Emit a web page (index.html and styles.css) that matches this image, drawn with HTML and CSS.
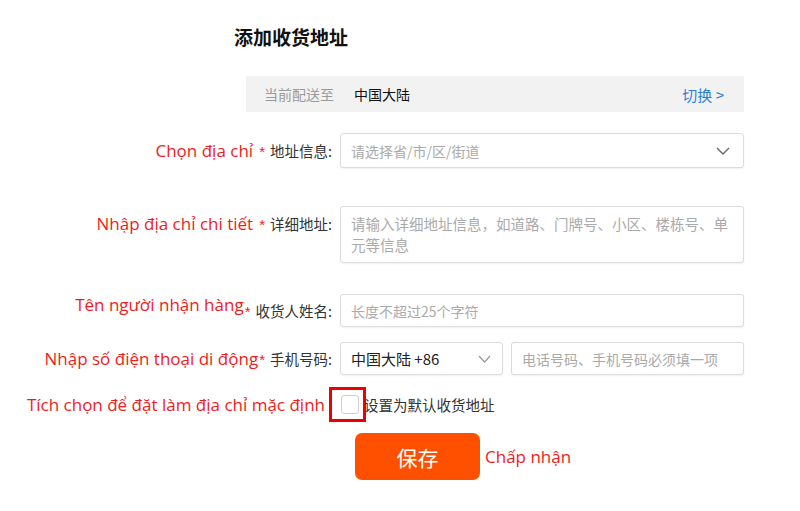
FILE: index.html
```html
<!DOCTYPE html>
<html lang="zh-CN">
<head>
    <meta charset="UTF-8">
    <title>添加收货地址</title>
    <link rel="stylesheet" href="styles.css">
</head>
<body>
    <div class="page">
        <h1 class="title">添加收货地址</h1>

        <div class="ship">
            <span class="ship-key">当前配送至</span>
            <span class="ship-val">中国大陆</span>
            <a class="ship-switch">切换 &gt;</a>
        </div>

        <div class="row">
            <div class="label"><span class="note">Chọn địa chỉ</span><span class="star">*</span><span class="cn">地址信息:</span></div>
            <div class="field select">
                <span class="ph">请选择省/市/区/街道</span>
                <svg class="chev" width="14" height="8" viewBox="0 0 14 8"><path d="M1 1l6 6 6-6" fill="none" stroke="#666" stroke-width="1.4"/></svg>
            </div>
        </div>

        <div class="row row-top gap-2">
            <div class="label"><span class="note">Nhập địa chỉ chi tiết</span><span class="star">*</span><span class="cn">详细地址:</span></div>
            <textarea class="field area" placeholder="请输入详细地址信息，如道路、门牌号、小区、楼栋号、单&#10;元等信息"></textarea>
        </div>

        <div class="row gap-3">
            <div class="label"><span class="note up">Tên người nhận hàng</span><span class="star tight">*</span><span class="cn">收货人姓名:</span></div>
            <input class="field short" placeholder="长度不超过25个字符">
        </div>

        <div class="row gap-4">
            <div class="label"><span class="note">Nhập số điện thoại di động</span><span class="star tight">*</span><span class="cn">手机号码:</span></div>
            <div class="phone">
                <div class="field select code">
                    <span>中国大陆 +86</span>
                    <svg class="chev" width="13" height="8" viewBox="0 0 13 8"><path d="M1 1l5.5 6 5.5-6" fill="none" stroke="#999" stroke-width="1.2"/></svg>
                </div>
                <input class="field short num" placeholder="电话号码、手机号码必须填一项">
            </div>
        </div>

        <div class="row check-row">
            <div class="label check-label"><span class="note">Tích chọn để đặt làm địa chỉ mặc định</span></div>
            <div class="check-wrap">
                <span class="mark"><span class="box"></span></span>
                <span class="check-text">设置为默认收货地址</span>
            </div>
        </div>

        <div class="actions">
            <button class="save">保存</button>
            <span class="note">Chấp nhận</span>
        </div>
    </div>
</body>
</html>
```

FILE: styles.css
```css
body {
    margin: 0;
    font-family: "Noto Sans CJK SC", "Noto Sans", sans-serif;
    color: #333;
    background: #fff;
}
.page {
    width: 744px;
    padding-top: 22px;
}
.title {
    margin: 0 0 0 234px;
    font-size: 19px;
    font-weight: bold;
    line-height: 30px;
    color: #111;
}
.ship {
    margin: 24px 0 0 246px;
    height: 36px;
    background: #f2f2f2;
    display: flex;
    align-items: center;
    padding: 0 20px 0 18px;
    font-size: 14px;
}
.ship-key {
    color: #9a9a9a;
    margin-right: 20px;
}
.ship-val {
    color: #111;
}
.ship-switch {
    margin-left: auto;
    color: #2d7fd8;
    font-size: 15px;
}
.row {
    display: flex;
    align-items: center;
    margin-top: 21px;
}
.row-top {
    align-items: flex-start;
}
.gap-2 { margin-top: 38px; }
.gap-3 { margin-top: 31px; }
.gap-4 { margin-top: 15px; }
.label {
    width: 332px;
    margin-right: 8px;
    text-align: right;
    font-size: 14.5px;
    color: #333;
    white-space: nowrap;
}
.row-top .label {
    padding-top: 6px;
}
.note {
    font-family: "Open Sans", "Noto Sans", sans-serif;
    font-size: 17px;
    color: #ee1c1c;
}
.note.up {
    position: relative;
    top: -6px;
}
.star {
    color: #ee1c1c;
    font-family: "Liberation Sans", sans-serif;
    font-size: 15px;
    margin: 0 5px 0 6px;
}
.star.tight {
    margin-left: 1px;
}
.field {
    box-sizing: border-box;
    width: 404px;
    border: 1px solid #dcdcdc;
    border-radius: 3px;
    box-shadow: 0 1px 2px rgba(0,0,0,0.06);
    font-family: "Noto Sans CJK SC", sans-serif;
    font-size: 14px;
    color: #222;
    background: #fff;
    padding: 0 10px;
    outline: none;
}
.field::placeholder {
    color: #aaa;
}
.select {
    height: 35px;
    display: flex;
    align-items: center;
    justify-content: space-between;
}
.select .ph {
    color: #aaa;
}
.chev {
    margin-right: 3px;
}
.area {
    height: 57px;
    padding: 6px 10px;
    resize: none;
    font-size: 14.5px;
    line-height: 21px;
    display: block;
}
.short {
    height: 33px;
}
.phone {
    display: flex;
    gap: 8px;
}
.code {
    width: 163px;
    height: 33px;
    padding-right: 8px;
    font-size: 15px;
}
.num {
    width: 233px;
}
.check-row {
    margin-top: 12px;
}
.check-label {
    width: 325px;
    margin-right: 4px;
}
.check-wrap {
    display: flex;
    align-items: center;
}
.mark {
    box-sizing: border-box;
    width: 37px;
    height: 35px;
    border: 3px solid #ee0000;
    display: flex;
    align-items: center;
    justify-content: center;
}
.box {
    width: 16px;
    height: 17px;
    border: 1px solid #cfcfcf;
    border-radius: 3px;
    background: #fff;
    margin-left: 5px;
}
.check-text {
    font-size: 14.5px;
    color: #333;
    margin-left: -2px;
}
.actions {
    display: flex;
    align-items: center;
    margin: 11px 0 0 355px;
}
.save {
    width: 125px;
    height: 47px;
    border: none;
    border-radius: 7px;
    background: #ff5000;
    color: #fff;
    font-family: "Noto Sans CJK SC", sans-serif;
    font-size: 21px;
    margin-right: 5px;
}
```
